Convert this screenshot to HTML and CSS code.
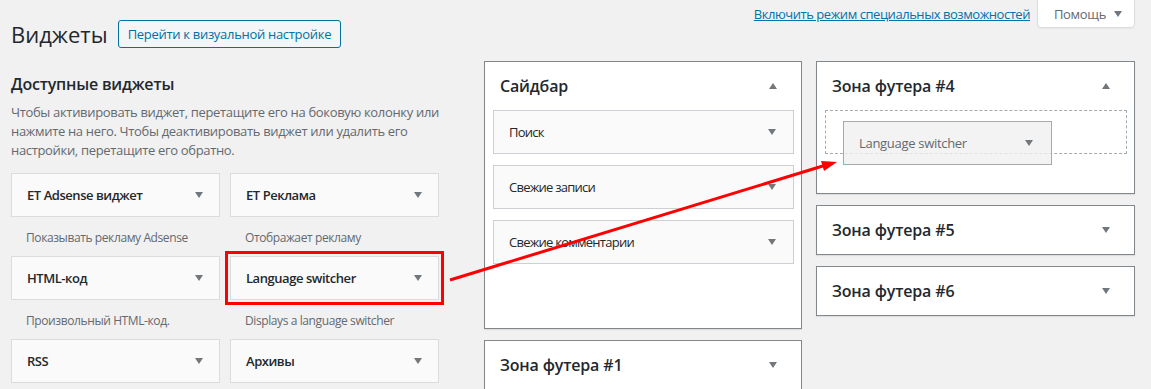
FILE: index.html
```
<!DOCTYPE html>
<html lang="ru">

<head>
    <meta charset="UTF-8">
    <meta name="viewport" content="width=device-width, initial-scale=1.0">
    <title>Виджеты</title>
    <link rel="stylesheet" href="styles.css">
</head>

<body>
    <!-- Top right links -->
    <div class="screen-meta">
        <a class="screen-link" href="#">Включить режим специальных возможностей</a>
        <button class="help-tab">Помощь <span class="tri"></span></button>
    </div>

    <div class="wrap">
        <div class="page-head">
            <h1>Виджеты</h1>
            <a class="page-action" href="#">Перейти к визуальной настройке</a>
        </div>

        <div class="columns">
            <!-- Available widgets -->
            <div class="available">
                <h2>Доступные виджеты</h2>
                <p class="hint">Чтобы активировать виджет, перетащите его на боковую колонку или<br>
                    нажмите на него. Чтобы деактивировать виджет или удалить его<br>
                    настройки, перетащите его обратно.</p>
                <div class="widget-grid">
                    <div class="item">
                        <div class="widget">ET Adsense виджет<span class="tri"></span></div>
                        <p class="desc">Показывать рекламу Adsense</p>
                    </div>
                    <div class="item">
                        <div class="widget">ET Реклама<span class="tri"></span></div>
                        <p class="desc">Отображает рекламу</p>
                    </div>
                    <div class="item">
                        <div class="widget">HTML-код<span class="tri"></span></div>
                        <p class="desc">Произвольный HTML-код.</p>
                    </div>
                    <div class="item">
                        <div class="widget marked">Language switcher<span class="tri"></span></div>
                        <p class="desc">Displays a language switcher</p>
                    </div>
                    <div class="item">
                        <div class="widget">RSS<span class="tri"></span></div>
                    </div>
                    <div class="item">
                        <div class="widget">Архивы<span class="tri"></span></div>
                    </div>
                </div>
            </div>

            <!-- Sidebars -->
            <div class="sidebars">
                <div class="sidebar-col">
                    <div class="panel tall">
                        <div class="panel-head">Сайдбар<span class="tri up"></span></div>
                        <div class="panel-list">
                            <div class="widget inner">Поиск<span class="tri"></span></div>
                            <div class="widget inner">Свежие записи<span class="tri"></span></div>
                            <div class="widget inner">Свежие комментарии<span class="tri"></span></div>
                        </div>
                    </div>
                    <div class="panel">
                        <div class="panel-head">Зона футера #1<span class="tri"></span></div>
                    </div>
                </div>
                <div class="sidebar-col wide">
                    <div class="panel drop">
                        <div class="panel-head">Зона футера #4<span class="tri up"></span></div>
                        <div class="panel-list">
                            <div class="placeholder"></div>
                        </div>
                        <div class="widget dragged">Language switcher<span class="tri"></span></div>
                    </div>
                    <div class="panel">
                        <div class="panel-head">Зона футера #5<span class="tri"></span></div>
                    </div>
                    <div class="panel">
                        <div class="panel-head">Зона футера #6<span class="tri"></span></div>
                    </div>
                </div>
            </div>
        </div>
    </div>

    <!-- Red arrow drawn over the page -->
    <svg class="arrow" width="1151" height="389" viewBox="0 0 1151 389">
        <line x1="450" y1="280" x2="826" y2="165" stroke="#f00" stroke-width="3" />
        <polygon points="837,162 824,171 821,161" fill="#f00" />
    </svg>
</body>

</html>
```

FILE: styles.css
```
body {
    margin: 0;
    background: #f1f1f1;
    font-family: "Open Sans", "Liberation Sans", sans-serif;
    font-size: 13px;
    color: #23282d;
    overflow: hidden;
}

.screen-meta {
    float: right;
    display: flex;
    align-items: center;
    height: 28px;
    margin-right: 16px;
}

.screen-link {
    color: #0073aa;
    margin-right: 7px;
    font-size: 13px;
    letter-spacing: -0.45px;
}

.help-tab {
    height: 29px;
    margin-top: -1px;
    width: 98px;
    padding: 0 0 0 4px;
    background: #fff;
    border: 1px solid #dcdcde;
    border-radius: 0 0 4px 4px;
    box-shadow: 0 1px 1px rgba(0, 0, 0, .04);
    font-family: inherit;
    font-size: 13px;
    letter-spacing: -0.3px;
    color: #646970;
    display: flex;
    align-items: center;
    justify-content: center;
    gap: 8px;
}

.tri {
    display: inline-block;
    width: 0;
    height: 0;
    border-left: 4px solid transparent;
    border-right: 4px solid transparent;
    border-top: 6px solid #72777c;
}

.tri.up {
    border-top: none;
    border-bottom: 6px solid #72777c;
}

.wrap {
    padding-left: 11px;
}

.page-head {
    display: flex;
    align-items: center;
    gap: 10px;
    padding-top: 20px;
}

h1 {
    margin: 0;
    font-size: 22px;
    font-weight: 400;
    line-height: 28px;
}

.page-action {
    height: 28px;
    box-sizing: border-box;
    padding: 0 9px;
    display: flex;
    align-items: center;
    border: 1px solid #0071a1;
    border-radius: 3px;
    background: #f3f5f6;
    color: #0071a1;
    font-size: 13px;
    font-weight: 500;
    letter-spacing: -0.3px;
    text-decoration: none;
}

.columns {
    display: flex;
    margin-top: 13px;
}

.available {
    width: 428px;
}

h2 {
    margin: 13px 0 0;
    font-size: 16px;
    font-weight: 600;
    line-height: 20px;
    letter-spacing: -0.2px;
}

.hint {
    margin: 9px 0 13px;
    line-height: 19px;
    color: #646970;
    letter-spacing: -0.33px;
    white-space: nowrap;
}

.widget-grid {
    display: grid;
    grid-template-columns: 209px 209px;
    column-gap: 10px;
}

.widget {
    height: 44px;
    box-sizing: border-box;
    padding: 0 16px 0 15px;
    display: flex;
    align-items: center;
    justify-content: space-between;
    background: #fafafa;
    border: 1px solid #dcdcde;
    font-weight: 600;
    letter-spacing: -0.45px;
}

.widget.marked {
    outline: 3px solid #f00;
    outline-offset: 2px;
}

.desc {
    margin: 12px 0 9px;
    padding-left: 15px;
    line-height: 18px;
    font-size: 12px;
    letter-spacing: -0.4px;
    color: #646970;
}

.sidebars {
    display: flex;
    gap: 14px;
    margin-left: 45px;
}

.sidebar-col {
    width: 318px;
    display: flex;
    flex-direction: column;
    gap: 11px;
}

.sidebar-col.wide {
    width: 319px;
}

.panel {
    position: relative;
    background: #fff;
    border: 1px solid #82878c;
    box-shadow: 0 1px 1px rgba(0, 0, 0, .08);
}

.panel.tall {
    height: 268px;
    box-sizing: border-box;
}

.panel.drop {
    padding-bottom: 39px;
}

.panel-head {
    height: 48px;
    padding: 0 24px 0 15px;
    display: flex;
    align-items: center;
    justify-content: space-between;
    font-size: 16px;
    font-weight: 600;
    letter-spacing: -0.15px;
}

.panel-list {
    display: flex;
    flex-direction: column;
    gap: 11px;
    padding: 0 7px 0 8px;
}

.widget.inner {
    padding-right: 17px;
    border-color: #ccd0d4;
    font-size: 13px;
    font-weight: 500;
    letter-spacing: -0.75px;
}

.placeholder {
    height: 44px;
    box-sizing: border-box;
    border: 1px dashed #a7aaad;
}

.widget.dragged {
    position: absolute;
    left: 26px;
    top: 59px;
    width: 209px;
    padding-right: 18px;
    background: rgba(240, 240, 240, .8);
    border-color: #a7aaad;
    color: #646970;
    font-weight: 400;
    letter-spacing: -0.3px;
}

.arrow {
    position: absolute;
    top: 0;
    left: 0;
    pointer-events: none;
}
```
